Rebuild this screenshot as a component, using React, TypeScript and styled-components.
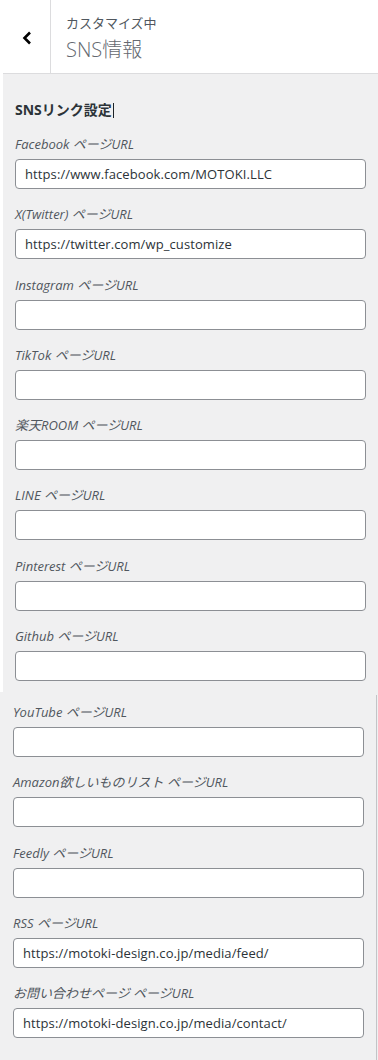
import React from "react";
import styled, { createGlobalStyle } from "styled-components";

const Global = createGlobalStyle`
  html, body { margin: 0; padding: 0; background: #ffffff; }
  body { font-family: "Open Sans", "Noto Sans CJK JP", sans-serif; }
  * { box-sizing: border-box; }
`;

const Page = styled.div`
  width: 378px;
  height: 1060px;
  overflow: hidden;
  background: #f0f0f1;
`;

const Upper = styled.div`
  height: 692px;
  padding-left: 3px;
  background: #ffffff;
  display: flex;
  flex-direction: column;
`;

const Header = styled.div`
  height: 74px;
  flex: none;
  display: flex;
  background: #ffffff;
  border-bottom: 1px solid #dcdcde;
`;

const BackButton = styled.div`
  width: 48px;
  border-right: 1px solid #dcdcde;
  display: flex;
  align-items: center;
  justify-content: center;
  padding-top: 2px;
`;

const TitleBox = styled.div`
  padding: 12px 0 0 15px;
  display: flex;
  flex-direction: column;
`;

const Crumb = styled.span`
  font-size: 13px;
  line-height: 22px;
  color: #50575e;
`;

const Title = styled.span`
  font-size: 20px;
  line-height: 32px;
  color: #646970;
  font-weight: 300;
`;

const Panel = styled.div<{ $top: number; $left: number }>`
  flex: 1;
  background: #f0f0f1;
  padding: ${(p) => p.$top}px 12px 0 ${(p) => p.$left}px;
  display: flex;
  flex-direction: column;
`;

const Lower = styled.div`
  width: 377px;
  height: 368px;
  border-right: 1px solid #c3c4c7;
  display: flex;
  flex-direction: column;
`;

const SectionTitle = styled.h3`
  margin: 0 0 13px;
  padding-top: 2px;
  font-size: 14px;
  line-height: 20px;
  font-weight: 700;
  color: #2c3338;
  display: flex;
  align-items: center;
`;

const Caret = styled.span`
  display: inline-block;
  width: 1px;
  height: 15px;
  background: #1d2327;
  margin-left: 1px;
`;

const Control = styled.div`
  display: flex;
  flex-direction: column;
  margin-bottom: 14.28px;
`;

const Label = styled.label`
  font-size: 13px;
  line-height: 20px;
  padding-top: 1px;
  font-style: italic;
  color: #50575e;
  margin-bottom: 5px;
`;

const Input = styled.input`
  width: 100%;
  height: 30px;
  border: 1px solid #8c8f94;
  border-radius: 4px;
  background: #ffffff;
  padding: 0 9px;
  font-family: "Open Sans", "Noto Sans CJK JP", sans-serif;
  font-size: 13px;
  letter-spacing: 0.1px;
  color: #2c3338;
  outline: none;
`;

type Item = { label: string; value?: string };

const upperItems: Item[] = [
  { label: "Facebook ページURL", value: "https://www.facebook.com/MOTOKI.LLC" },
  { label: "X(Twitter) ページURL", value: "https://twitter.com/wp_customize" },
  { label: "Instagram ページURL" },
  { label: "TikTok ページURL" },
  { label: "楽天ROOM ページURL" },
  { label: "LINE ページURL" },
  { label: "Pinterest ページURL" },
  { label: "Github ページURL" },
];

const lowerItems: Item[] = [
  { label: "YouTube ページURL" },
  { label: "Amazon欲しいものリスト ページURL" },
  { label: "Feedly ページURL" },
  { label: "RSS ページURL", value: "https://motoki-design.co.jp/media/feed/" },
  { label: "お問い合わせページ ページURL", value: "https://motoki-design.co.jp/media/contact/" },
];

const Field = ({ label, value }: Item) => (
  <Control>
    <Label>{label}</Label>
    <Input type="text" defaultValue={value ?? ""} readOnly />
  </Control>
);

export default function App() {
  return (
    <Page>
      <Global />
      <Upper>
        <Header>
          <BackButton>
            <svg width="10" height="14" viewBox="0 0 10 14" aria-hidden>
              <polyline
                points="8,1.5 2.5,7 8,12.5"
                fill="none"
                stroke="#000"
                strokeWidth="2.6"
                strokeLinecap="butt"
                strokeLinejoin="miter"
              />
            </svg>
          </BackButton>
          <TitleBox>
            <Crumb>カスタマイズ中</Crumb>
            <Title>SNS情報</Title>
          </TitleBox>
        </Header>
        <Panel $top={24} $left={12}>
          <SectionTitle>
            SNSリンク設定
            <Caret />
          </SectionTitle>
          {upperItems.map((it) => (
            <Field key={it.label} {...it} />
          ))}
        </Panel>
      </Upper>
      <Lower>
        <Panel $top={9} $left={13}>
          {lowerItems.map((it) => (
            <Field key={it.label} {...it} />
          ))}
        </Panel>
      </Lower>
    </Page>
  );
}
